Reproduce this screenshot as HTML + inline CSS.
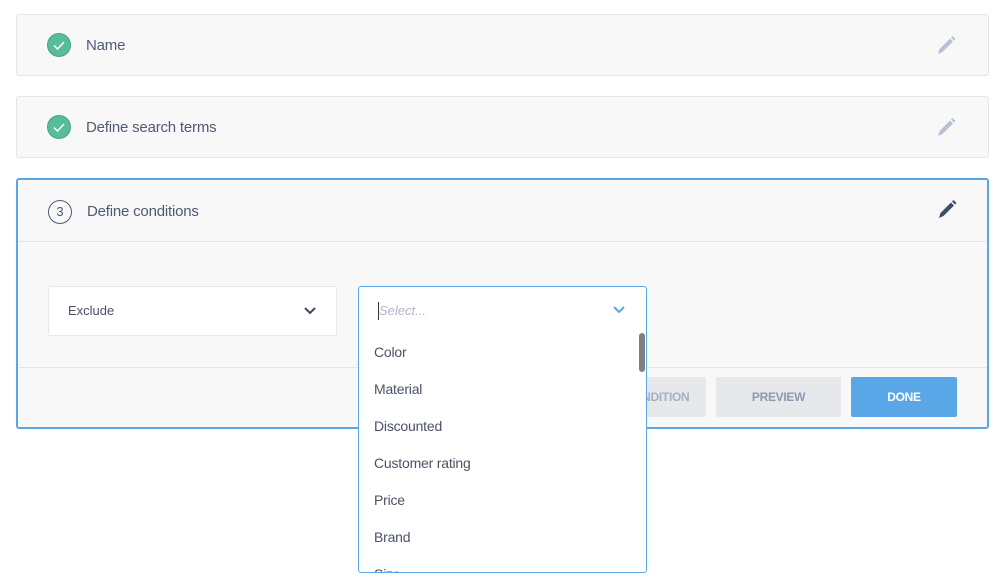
<!DOCTYPE html>
<html><head><style>
*{box-sizing:border-box;margin:0;padding:0}
body{width:1005px;height:585px;background:#fff;font-family:"Liberation Sans",sans-serif;position:relative;overflow:hidden;color:#4b5770}
.p{position:absolute;left:16px;width:973px;background:#f8f8f8;border:1px solid #e3e5ea;border-radius:3px}
.t{position:absolute;left:69px;font-size:15px;color:#4f5b73;letter-spacing:-0.2px}
.ck{position:absolute;left:30px;width:24px;height:24px;border-radius:50%;background:#56bc99;border:1px solid #47a585}
.pen{position:absolute;left:918px}
.btn{position:absolute;top:377px;height:40px;font-size:12px;font-weight:bold;text-align:center;line-height:40px;border-radius:2px;letter-spacing:-0.3px}
.o{position:absolute;left:15px;font-size:14px;color:#4a5266;letter-spacing:-0.2px}
</style></head><body>
<div class="p" style="top:14px;height:62px">
 <div class="ck" style="top:18px"><svg width="22" height="22" viewBox="0 0 22 22"><path d="M6 11.5l3.5 3.5 6.5-7" fill="none" stroke="#fff" stroke-width="1.5"/></svg></div>
 <div class="t" style="top:22px">Name</div>
 <svg class="pen" style="top:19px" width="22" height="22" viewBox="0 0 22 22"><path d="M3 20l1.5-5L15 4.5l3 3L7.5 18z" fill="#b7c1d3"/><path d="M16 3.5l1.5-1.5 3 3-1.5 1.5z" fill="#b7c1d3"/></svg>
</div>
<div class="p" style="top:96px;height:62px">
 <div class="ck" style="top:18px"><svg width="22" height="22" viewBox="0 0 22 22"><path d="M6 11.5l3.5 3.5 6.5-7" fill="none" stroke="#fff" stroke-width="1.5"/></svg></div>
 <div class="t" style="top:22px">Define search terms</div>
 <svg class="pen" style="top:19px" width="22" height="22" viewBox="0 0 22 22"><path d="M3 20l1.5-5L15 4.5l3 3L7.5 18z" fill="#b7c1d3"/><path d="M16 3.5l1.5-1.5 3 3-1.5 1.5z" fill="#b7c1d3"/></svg>
</div>
<div class="p" style="top:178px;height:251px;border:2px solid #5aa7e8">
 <div style="position:absolute;left:30px;top:20px;width:24px;height:24px;border-radius:50%;border:1.5px solid #4f5b73;font-size:13px;text-align:center;line-height:21px">3</div>
 <div class="t" style="top:23px">Define conditions</div>
 <svg class="pen" style="top:18px" width="22" height="22" viewBox="0 0 22 22"><path d="M3 20l1.5-5L15 4.5l3 3L7.5 18z" fill="#3f4d66"/><path d="M16 3.5l1.5-1.5 3 3-1.5 1.5z" fill="#3f4d66"/></svg>
 <div style="position:absolute;left:0;right:0;top:61px;border-top:1px solid #e3e5ea"></div>
 <div style="position:absolute;left:0;right:0;top:187px;border-top:1px solid #e3e5ea"></div>
</div>
<div style="position:absolute;left:48px;top:286px;width:289px;height:50px;background:#fff;border:1px solid #e6e8ec;border-radius:2px">
 <div style="position:absolute;left:19px;top:16px;font-size:13px;color:#4a5266">Exclude</div>
 <svg style="position:absolute;left:254px;top:18px" width="14" height="12" viewBox="0 0 14 12"><path d="M2 3l5 5 5-5" fill="none" stroke="#3f4a5e" stroke-width="2"/></svg>
</div>
<div class="btn" style="left:580px;width:126px;background:#e6e8ec;color:#a5b0c3">ADD CONDITION</div>
<div class="btn" style="left:716px;width:125px;background:#e6e8ec;color:#8d99ae">PREVIEW</div>
<div class="btn" style="left:851px;width:106px;background:#5aa7e8;color:#fff">DONE</div>
<div style="position:absolute;left:358px;top:286px;width:289px;height:287px;background:#fff;border:1px solid #5aa7e8;border-radius:3px;overflow:hidden">
 <div style="position:absolute;left:19px;top:15px;width:1px;height:18px;background:#333"></div>
 <div style="position:absolute;left:20px;top:16px;font-size:13px;font-style:italic;color:#b0b7c5">Select...</div>
 <svg style="position:absolute;left:253px;top:17px" width="14" height="12" viewBox="0 0 14 12"><path d="M2 3l5 5 5-5" fill="none" stroke="#5aa7e8" stroke-width="2"/></svg>
 <div style="position:absolute;left:280px;top:46px;width:6px;height:39px;border-radius:3px;background:#808080"></div>
 <div class="o" style="top:57px">Color</div>
 <div class="o" style="top:94px">Material</div>
 <div class="o" style="top:131px">Discounted</div>
 <div class="o" style="top:168px">Customer rating</div>
 <div class="o" style="top:205px">Price</div>
 <div class="o" style="top:242px">Brand</div>
 <div class="o" style="top:279px">Size</div>
</div>
</body></html>
